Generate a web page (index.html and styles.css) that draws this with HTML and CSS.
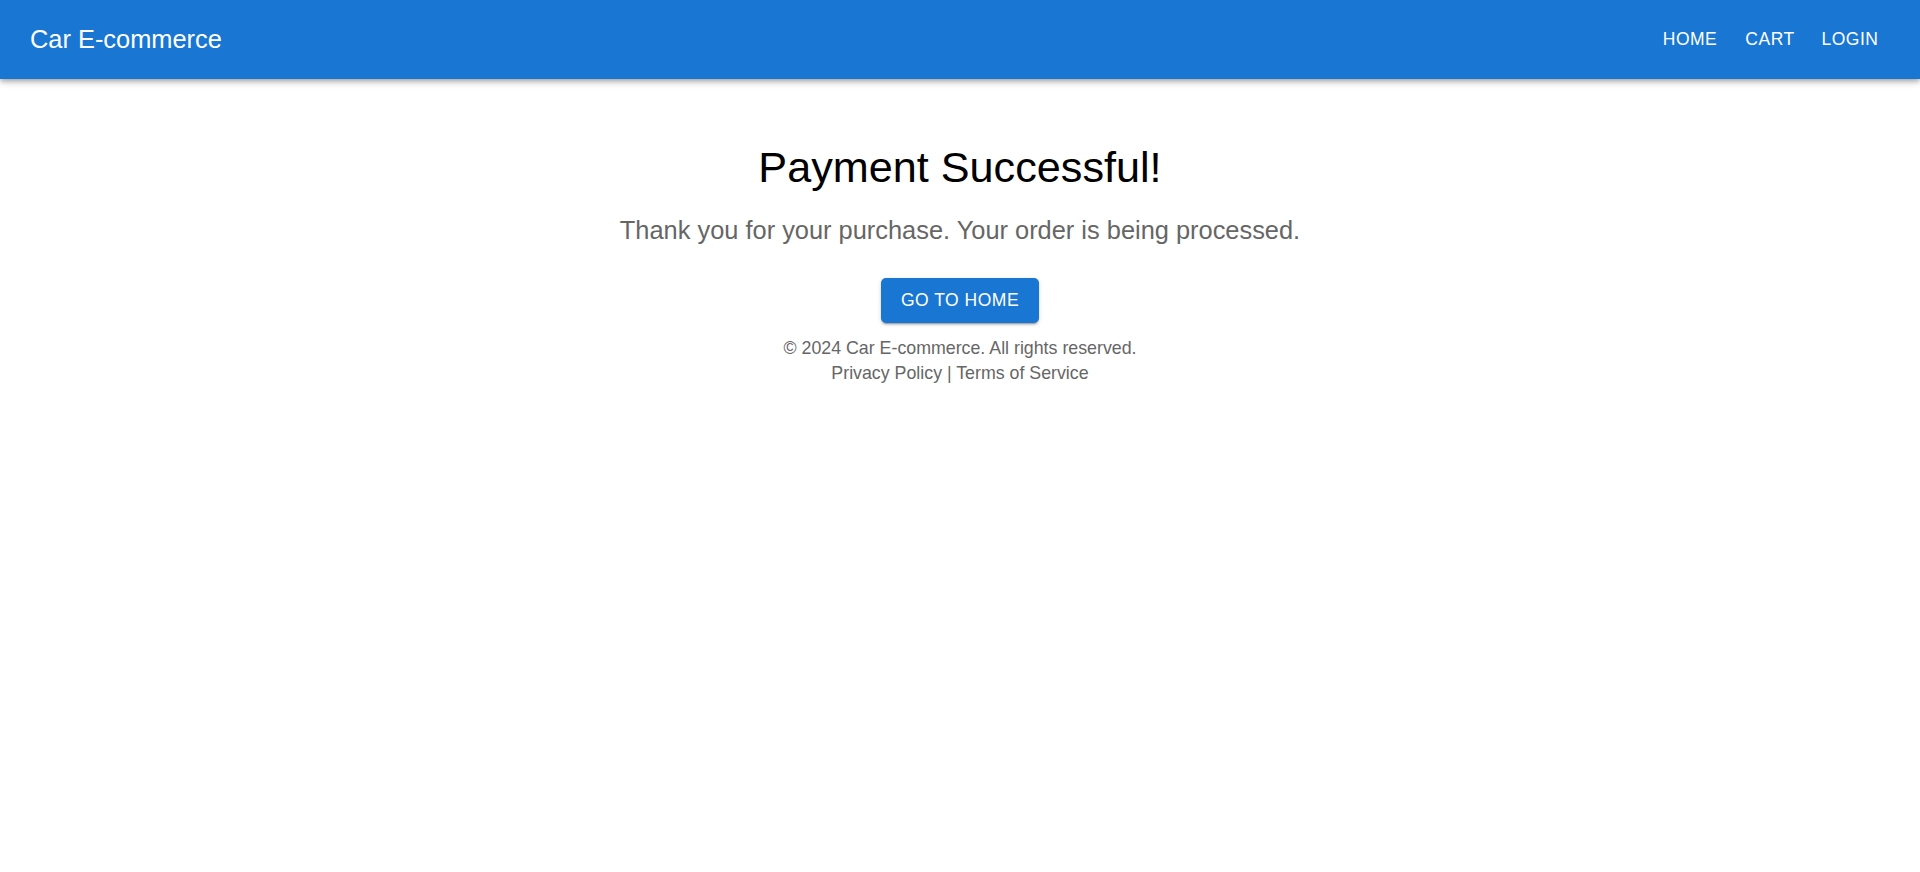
FILE: index.html
```html
<!DOCTYPE html>
<html lang="en">
<head>
<meta charset="utf-8">
<title>Car E-commerce</title>
<link rel="stylesheet" href="styles.css">
</head>
<body>
<header class="appbar">
  <div class="brand">Car E-commerce</div>
  <nav class="nav">
    <a class="nav-btn" href="#">Home</a>
    <a class="nav-btn" href="#">Cart</a>
    <a class="nav-btn" href="#">Login</a>
  </nav>
</header>
<main class="content">
  <h1 class="title">Payment Successful!</h1>
  <p class="subtitle">Thank you for your purchase. Your order is being processed.</p>
  <a class="primary-btn" href="#">Go to Home</a>
  <footer class="footer">
    <div>© 2024 Car E-commerce. All rights reserved.</div>
    <div>Privacy Policy | Terms of Service</div>
  </footer>
</main>
</body>
</html>
```
FILE: styles.css
```css
html, body {
  margin: 0;
  padding: 0;
  background: #ffffff;
  font-family: "Liberation Sans", Arial, sans-serif;
}

.appbar {
  height: 79px;
  background: #1976d2;
  color: #ffffff;
  display: flex;
  align-items: center;
  justify-content: space-between;
  padding: 0 30px;
  box-shadow: 0 2px 4px -1px rgba(0,0,0,0.2), 0 4px 5px 0 rgba(0,0,0,0.14), 0 1px 10px 0 rgba(0,0,0,0.12);
  position: relative;
}

.brand {
  font-size: 25.4px;
  line-height: 1.6;
  font-weight: 400;
}

.nav {
  display: flex;
  align-items: center;
}

.nav-btn {
  color: #ffffff;
  text-decoration: none;
  text-transform: uppercase;
  font-size: 17.5px;
  font-weight: 500;
  letter-spacing: 0.5px;
  min-width: 80px;
  padding: 8px 10px;
  box-sizing: border-box;
  text-align: center;
  line-height: 1.75;
}

.content {
  display: flex;
  flex-direction: column;
  align-items: center;
  text-align: center;
  padding-top: 62px;
}

.title {
  margin: 0 0 16px;
  font-size: 43.2px;
  line-height: 52.5px;
  font-weight: 400;
  color: #000000;
}

.subtitle {
  margin: 0 0 28px;
  font-size: 25.4px;
  line-height: 40px;
  color: #666666;
}

.primary-btn {
  display: inline-flex;
  align-items: center;
  justify-content: center;
  height: 45px;
  padding: 0 20px;
  box-sizing: border-box;
  background: #1976d2;
  color: #ffffff;
  text-decoration: none;
  text-transform: uppercase;
  font-size: 17.5px;
  font-weight: 500;
  letter-spacing: 0.5px;
  border-radius: 5px;
  box-shadow: 0 3px 1px -2px rgba(0,0,0,0.2), 0 2px 2px 0 rgba(0,0,0,0.14), 0 1px 5px 0 rgba(0,0,0,0.12);
}

.footer {
  margin-top: 13px;
  font-size: 17.8px;
  line-height: 25px;
  color: #666666;
}
```
